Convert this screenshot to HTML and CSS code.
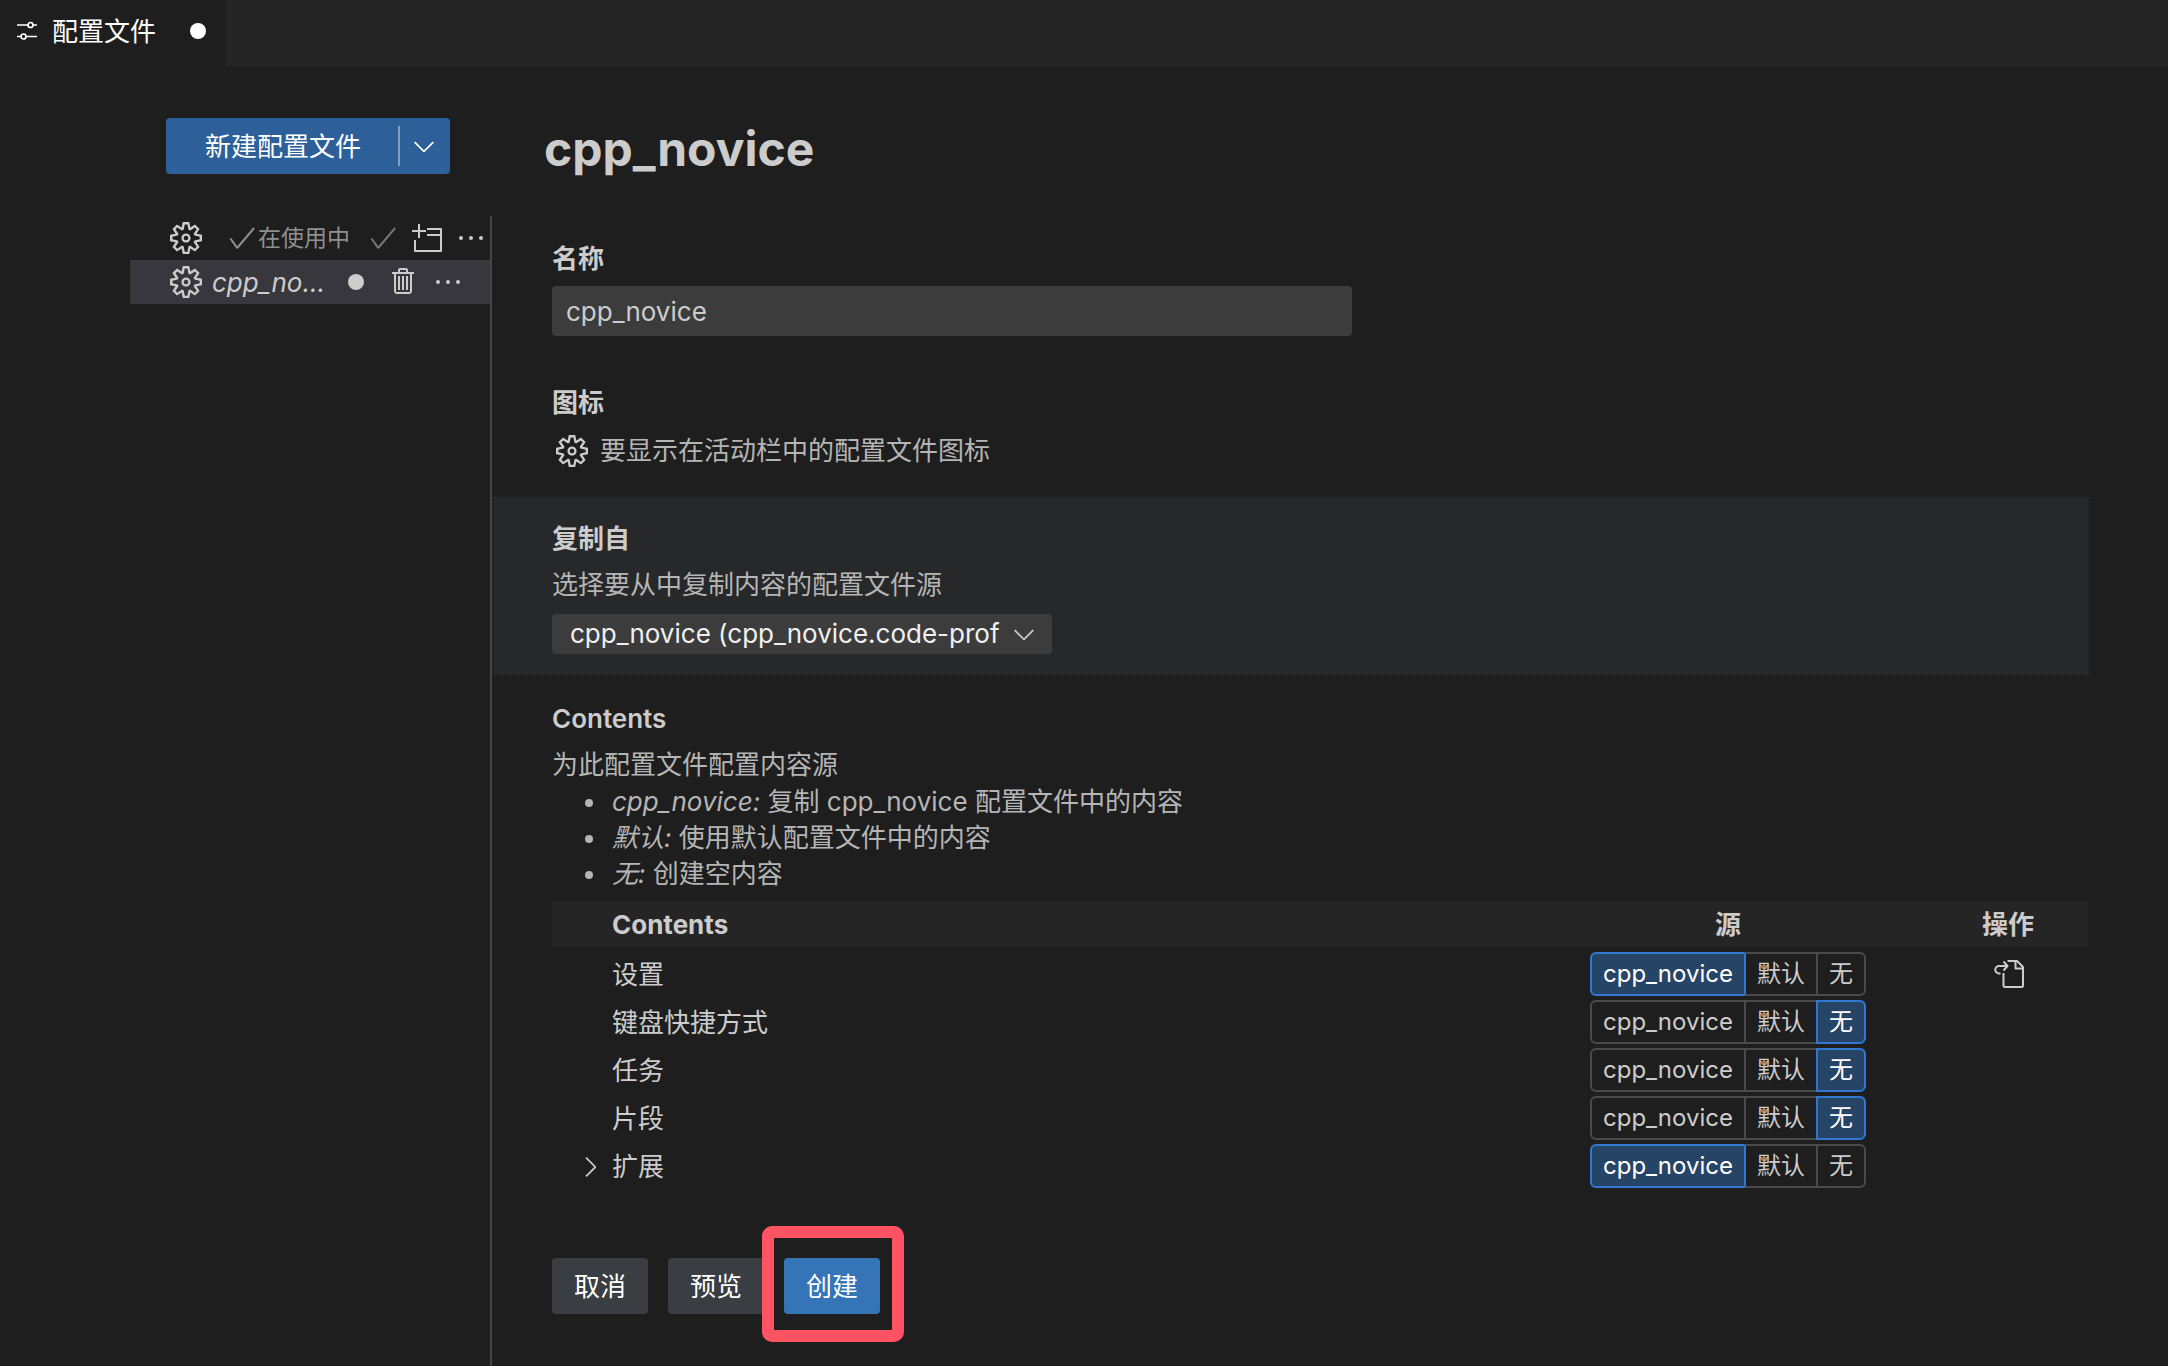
FILE: index.html
```html
<!DOCTYPE html>
<html lang="zh-CN">
<head>
<meta charset="utf-8">
<meta name="viewport" content="width=device-width, initial-scale=1">
<title>配置文件</title>
<link rel="stylesheet" href="styles.css">
</head>
<body>
<svg class="sprite" aria-hidden="true">
  <symbol id="gear" viewBox="0 0 24 24"><path fill-rule="evenodd" d="M19.85 8.75l4.15.83v4.84l-4.15.83 2.35 3.52-3.43 3.43-3.52-2.35-.83 4.15H9.58l-.83-4.15-3.52 2.35-3.43-3.43 2.35-3.52L0 14.42V9.58l4.15-.83L1.8 5.23 5.23 1.8l3.52 2.35L9.58 0h4.84l.83 4.15 3.52-2.35 3.43 3.43-2.35 3.52zm-1.57 5.07l4-.81v-2l-4-.81-.54-1.3 2.29-3.43-1.43-1.43-3.43 2.29-1.3-.54-.81-4h-2l-.81 4-1.3.54-3.43-2.29-1.43 1.43L6.38 8.9l-.54 1.3-4 .81v2l4 .81.54 1.3-2.29 3.43 1.43 1.43 3.43-2.29 1.3.54.81 4h2l.81-4 1.3-.54 3.43 2.29 1.43-1.43-2.29-3.43.54-1.3zm-8.186-4.672A3.43 3.43 0 0 1 12 8.57 3.44 3.44 0 0 1 15.43 12a3.43 3.43 0 1 1-5.336-2.852zm.956 4.274c.281.188.612.288.95.288A1.7 1.7 0 0 0 13.71 12a1.71 1.71 0 1 0-2.66 1.422z"/></symbol>
  <symbol id="check" viewBox="0 0 16 16"><path fill-rule="evenodd" d="M14.431 3.323l-8.47 10-.79-.036-3.35-4.77.818-.574 2.978 4.24 8.051-9.506.764.646z"/></symbol>
  <symbol id="more" viewBox="0 0 16 16"><path d="M4 8a1 1 0 1 1-2 0 1 1 0 0 1 2 0zm5 0a1 1 0 1 1-2 0 1 1 0 0 1 2 0zm5 0a1 1 0 1 1-2 0 1 1 0 0 1 2 0z"/></symbol>
  <symbol id="down" viewBox="0 0 16 16"><path fill-rule="evenodd" d="M7.976 10.072l4.357-4.357.62.618L8.284 11h-.618L3 6.333l.619-.618 4.357 4.357z"/></symbol>
  <symbol id="right" viewBox="0 0 16 16"><path fill-rule="evenodd" d="M10.072 8.024L5.715 3.667l.618-.62L11 7.716v.618L6.333 13l-.618-.619 4.357-4.357z"/></symbol>
  <symbol id="window" viewBox="0 0 32 32"><path fill="none" stroke="currentColor" stroke-width="2" stroke-linejoin="round" d="M8 2v14M1 9h14M16 7h14v22H4V18M16 13h14"/></symbol>
  <symbol id="trash" viewBox="0 0 16 16"><path fill-rule="evenodd" d="M10 3h3v1h-1v9l-1 1H4l-1-1V4H2V3h3V2a1 1 0 0 1 1-1h3a1 1 0 0 1 1 1v1zM9 2H6v1h3V2zM4 13h7V4H4v9zm2-8H5v7h1V5zm1 0h1v7H7V5zm2 0h1v7H9V5z"/></symbol>
  <symbol id="sliders" viewBox="0 0 24 24"><path fill="none" stroke="currentColor" stroke-width="1.700" d="M2 6h11M18 6h4M2 17.500h4M11 17.500h11"/><circle cx="15.500" cy="6" r="2.500" fill="none" stroke="currentColor" stroke-width="1.700"/><circle cx="8.500" cy="17.500" r="2.500" fill="none" stroke="currentColor" stroke-width="1.700"/></symbol>
  <symbol id="export" viewBox="0 0 32 32"><path fill="none" stroke="currentColor" stroke-width="2" stroke-linejoin="round" d="M15.500 3H25l6 6v19l-1 1H12.500l-1-1V15M23.500 3v7.500H31M8.500 15.500H7A3.750 3.750 0 0 1 7 8h8.500M11.500 3.500L15.500 8l-4 4.500"/></symbol>
</svg>

<header class="tabs">
  <div class="tab"><svg class="tab-icon"><use href="#sliders"/></svg><span class="tab-label">配置文件</span><span class="dot"></span></div>
</header>

<div class="editor">
  <aside class="side">
    <div class="split">
      <button class="split-main" type="button">新建配置文件</button>
      <button class="split-drop" type="button" aria-label="更多"><svg class="icon"><use href="#down"/></svg></button>
    </div>
    <ul class="profiles">
      <li class="profile">
        <svg class="icon"><use href="#gear"/></svg>
        <span class="in-use"><svg class="icon"><use href="#check"/></svg>在使用中</span>
        <span class="actions">
          <button class="tool dim" type="button" aria-label="使用"><svg class="icon"><use href="#check"/></svg></button>
          <button class="tool" type="button" aria-label="新建窗口"><svg class="icon"><use href="#window"/></svg></button>
          <button class="tool" type="button" aria-label="更多操作"><svg class="icon"><use href="#more"/></svg></button>
        </span>
      </li>
      <li class="profile selected">
        <svg class="icon"><use href="#gear"/></svg>
        <span class="profile-name">cpp_no...</span>
        <span class="dot"></span>
        <span class="actions draft">
          <button class="tool" type="button" aria-label="删除"><svg class="icon"><use href="#trash"/></svg></button>
          <button class="tool" type="button" aria-label="更多操作"><svg class="icon"><use href="#more"/></svg></button>
        </span>
      </li>
    </ul>
  </aside>

  <main class="main">
    <h1 class="title">cpp_novice</h1>
    <div class="body">
      <section class="section">
        <label class="heading" for="name">名称</label>
        <input class="name" id="name" type="text" value="cpp_novice">
      </section>
      <section class="section icon-section">
        <h2 class="heading">图标</h2>
        <div class="icon-row"><svg class="icon"><use href="#gear"/></svg><span class="desc">要显示在活动栏中的配置文件图标</span></div>
      </section>
      <section class="section copy">
        <label class="heading" for="source">复制自</label>
        <p class="desc">选择要从中复制内容的配置文件源</p>
        <div class="select-box">
          <select class="select" id="source"><option>cpp_novice (cpp_novice.code-prof</option></select>
          <svg class="icon select-arrow"><use href="#down"/></svg>
        </div>
      </section>
      <section class="section contents">
        <h2 class="heading">Contents</h2>
        <p class="desc">为此配置文件配置内容源</p>
        <ul class="notes desc">
          <li><em>cpp_novice:</em> 复制 cpp_novice 配置文件中的内容</li>
          <li><em>默认:</em> 使用默认配置文件中的内容</li>
          <li><em>无:</em> 创建空内容</li>
        </ul>
        <table class="table">
          <colgroup><col><col class="col-source"><col class="col-action"></colgroup>
          <thead><tr><th class="first">Contents</th><th>源</th><th>操作</th></tr></thead>
          <tbody>
            <tr><td class="first">设置</td><td><div class="group"><button class="opt on" type="button">cpp_novice</button><button class="opt" type="button">默认</button><button class="opt" type="button">无</button></div></td><td><button class="tool export" type="button" aria-label="导出"><svg class="icon"><use href="#export"/></svg></button></td></tr>
            <tr><td class="first">键盘快捷方式</td><td><div class="group"><button class="opt" type="button">cpp_novice</button><button class="opt" type="button">默认</button><button class="opt on" type="button">无</button></div></td><td></td></tr>
            <tr><td class="first">任务</td><td><div class="group"><button class="opt" type="button">cpp_novice</button><button class="opt" type="button">默认</button><button class="opt on" type="button">无</button></div></td><td></td></tr>
            <tr><td class="first">片段</td><td><div class="group"><button class="opt" type="button">cpp_novice</button><button class="opt" type="button">默认</button><button class="opt on" type="button">无</button></div></td><td></td></tr>
            <tr><td class="first expandable"><div class="expand"><svg class="icon"><use href="#right"/></svg>扩展</div></td><td><div class="group"><button class="opt on" type="button">cpp_novice</button><button class="opt" type="button">默认</button><button class="opt" type="button">无</button></div></td><td></td></tr>
          </tbody>
        </table>
      </section>
      <div class="section footer">
        <button class="btn" type="button">取消</button>
        <button class="btn" type="button">预览</button>
        <span class="marked"><button class="btn primary" type="button">创建</button></span>
      </div>
    </div>
  </main>
</div>
</body>
</html>
```
FILE: styles.css
```css
* { box-sizing: border-box; }
body {
  margin: 0;
  min-height: 100vh;
  display: flex;
  flex-direction: column;
  background: #1e1e1e;
  color: #cccccc;
  font: 26px/36px Inter, "Noto Sans CJK SC", sans-serif;
}
button, input, select { font: inherit; color: inherit; margin: 0; border: 0; }
h1, h2, p, ul { margin: 0; padding: 0; }
svg { fill: currentColor; flex: none; }
.sprite { position: absolute; width: 0; height: 0; }
.icon { width: 32px; height: 32px; display: block; }
.dot { width: 16px; height: 16px; border-radius: 50%; background: currentColor; flex: none; }

.tabs { display: flex; height: 66px; background: #252526; }
.tab { display: flex; align-items: center; width: 226px; padding: 0 20px 4px 15px; background: #1e1e1e; color: #fff; }
.tab-icon { width: 24px; height: 24px; }
.tab-label { margin-left: 13px; padding-top: 2px; }
.tab .dot { margin-left: auto; }

.editor { flex: 1; display: flex; }
.side { width: 490px; flex: none; display: flex; flex-direction: column; padding: 52px 0 0 130px; }
.split { display: flex; align-items: center; width: 284px; height: 56px; margin-left: 36px; background: #2d6099; border-radius: 4px; color: #fff; }
.split-main { flex: 1; padding: 2px 0 0 2px; background: none; }
.split-drop { width: 52px; height: 40px; padding: 0 8px; background: none; border-left: 2px solid #81a0c2; }
.profiles { list-style: none; margin-top: 42px; }
.profile { display: flex; align-items: center; height: 44px; padding-left: 40px; }
.selected { background: #37373d; }
.profile-name { width: 116px; margin-left: 10px; padding-top: 2px; font-style: italic; white-space: nowrap; }
.profile .dot { margin-left: 20px; }
.in-use { display: flex; align-items: center; margin-left: 24px; font-size: 23px; color: #8f8f8f; }
.actions { display: flex; gap: 12px; margin-left: auto; padding-right: 3px; }
.draft { padding-right: 26px; }
.tool { padding: 0; background: none; }
.dim { color: #757575; }

.main { flex: 1; min-width: 0; display: flex; flex-direction: column; }
.title { margin: 52px 0 36px 54px; font-size: 48px; line-height: 62px; font-weight: 700; }
.body { flex: 1; border-left: 2px solid #444; padding-right: 78px; }
.section { padding: 0 0 0 60px; }
.heading { display: block; font-size: 26px; font-weight: 600; line-height: 36px; }
.desc { color: #b5b5b5; }
.name { display: block; width: 800px; max-width: 100%; height: 50px; margin-top: 9px; padding: 0 14px; background: #3c3c3c; border-radius: 4px; }
.section:first-child { padding-top: 25px; }
.icon-section { padding-top: 49px; padding-bottom: 27px; }
.icon-row { display: flex; align-items: center; gap: 12px; margin-top: 12px; padding-left: 4px; }
.copy { padding: 23px 0 20px 58px; background: #26282a; border: 2px dotted #1e1e1e; }
.copy .desc, .contents p { margin-top: 10px; }
.select-box { position: relative; width: 500px; max-width: 100%; height: 40px; margin-top: 11px; }
.select { appearance: none; width: 100%; height: 40px; padding: 0 48px 0 18px; background: #3c3c3c; color: #f0f0f0; border-radius: 4px; line-height: 36px; }
.select-arrow { position: absolute; right: 12px; top: 4px; }
.contents { padding-top: 25px; padding-right: 2px; }
.notes { margin-top: 1px; padding-left: 56px; line-height: 36px; }
.notes li { padding-left: 4px; }
.table { width: 100%; border-collapse: collapse; margin-top: 10px; table-layout: fixed; }
.table th, .table td { height: 48px; padding: 0; text-align: center; vertical-align: middle; }
.table th { height: 44px; padding-top: 2px; background: #252526; font-weight: 700; }
.table .first { padding-left: 60px; padding-top: 2px; text-align: left; }
.col-source { width: 400px; }
.col-action { width: 160px; }
.table tbody tr:first-child td { height: 52px; padding-top: 4px; }
.table tbody tr:first-child .first { padding-top: 6px; }
.group { display: inline-flex; height: 44px; vertical-align: middle; font-size: 24px; line-height: 36px; }
.opt { padding: 0 11px; background: none; border: 2px solid #4a4a4a; border-right-width: 0; }
.opt:first-child { border-radius: 6px 0 0 6px; }
.opt:last-child { border-right-width: 2px; border-radius: 0 6px 6px 0; }
.on { background: #264566; border-color: #2f77d0; color: #fff; }
.on + .opt { border-left-color: #2f77d0; }
.export { display: block; margin: 0 auto; }
.table .expandable { padding-left: 22px; }
.expand { display: flex; align-items: center; gap: 6px; }
.footer { display: flex; gap: 20px; padding-top: 68px; }
.btn { width: 96px; height: 56px; padding: 2px 0 0; border-radius: 4px; background: #3a3d41; color: #fff; }
.primary { background: #3574b7; }
.marked { position: relative; }
.marked::after { content: ""; position: absolute; inset: -32px -24px -28px -22px; border: 12px solid #ff5263; border-radius: 10px; pointer-events: none; }
```
